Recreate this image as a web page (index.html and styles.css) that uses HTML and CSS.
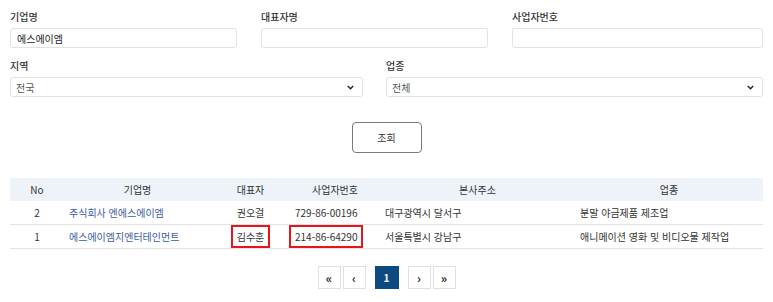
FILE: index.html
```html
<!DOCTYPE html>
<html lang="ko">
<head>
    <meta charset="UTF-8">
    <meta name="viewport" content="width=device-width, initial-scale=1.0">
    <title>기업 조회</title>
    <link rel="stylesheet" href="styles.css">
</head>
<body>
    <div class="search">
        <div class="row row-3">
            <div class="field">
                <label for="corp-name">기업명</label>
                <input type="text" id="corp-name" value="에스에이엠" />
            </div>
            <div class="field">
                <label for="ceo-name">대표자명</label>
                <input type="text" id="ceo-name" />
            </div>
            <div class="field">
                <label for="biz-no">사업자번호</label>
                <input type="text" id="biz-no" />
            </div>
        </div>
        <div class="row row-2">
            <div class="field">
                <label for="region">지역</label>
                <div class="select-wrap">
                    <select id="region">
                        <option>전국</option>
                        <option>서울특별시</option>
                        <option>대구광역시</option>
                    </select>
                    <svg class="chev" width="7" height="5" viewBox="0 0 7 5"><path d="M0.8 1 L3.5 3.8 L6.2 1" fill="none" stroke="#222" stroke-width="1.4"/></svg>
                </div>
            </div>
            <div class="field">
                <label for="industry">업종</label>
                <div class="select-wrap">
                    <select id="industry">
                        <option>전체</option>
                    </select>
                    <svg class="chev" width="7" height="5" viewBox="0 0 7 5"><path d="M0.8 1 L3.5 3.8 L6.2 1" fill="none" stroke="#222" stroke-width="1.4"/></svg>
                </div>
            </div>
        </div>
        <div class="search-btn">
            <button class="btn">조회</button>
        </div>
    </div>

    <table class="result">
        <colgroup>
            <col class="c-no">
            <col class="c-name">
            <col class="c-ceo">
            <col class="c-biz">
            <col class="c-addr">
            <col class="c-type">
        </colgroup>
        <thead>
            <tr>
                <th>No</th>
                <th>기업명</th>
                <th>대표자</th>
                <th>사업자번호</th>
                <th>본사주소</th>
                <th>업종</th>
            </tr>
        </thead>
        <tbody>
            <tr>
                <td class="center">2</td>
                <td><a href="#">주식회사 엔에스에이엠</a></td>
                <td class="center">권오걸</td>
                <td>729-86-00196</td>
                <td>대구광역시 달서구</td>
                <td>분말 야금제품 제조업</td>
            </tr>
            <tr>
                <td class="center">1</td>
                <td><a href="#">에스에이엠지엔터테인먼트</a></td>
                <td class="center"><span class="mark">김수훈</span></td>
                <td><span class="mark mark-left">214-86-64290</span></td>
                <td>서울특별시 강남구</td>
                <td>애니메이션 영화 및 비디오물 제작업</td>
            </tr>
        </tbody>
    </table>

    <div class="paging">
        <a href="#" class="pg">&laquo;</a>
        <a href="#" class="pg">&lsaquo;</a>
        <a href="#" class="pg active">1</a>
        <a href="#" class="pg">&rsaquo;</a>
        <a href="#" class="pg">&raquo;</a>
    </div>
</body>
</html>
```

FILE: styles.css
```css
body {
    font-family: "Noto Sans CJK KR", "Noto Sans", sans-serif;
    color: #333333;
    background: #ffffff;
    margin: 0;
    padding: 10px 10px 0;
    font-size: 10px;
}

.row {
    display: grid;
    margin-bottom: 11px;
}

.row-3 {
    grid-template-columns: 227px 227px 1fr;
    column-gap: 24px;
}

.row-2 {
    grid-template-columns: 353px 1fr;
    column-gap: 23px;
}

.field label {
    display: block;
    font-size: 10px;
    font-weight: 500;
    line-height: 14px;
    margin-bottom: 4px;
    color: #333333;
}

.field input,
.field select {
    display: block;
    width: 100%;
    height: 20px;
    box-sizing: border-box;
    border: 1px solid #e2e2e2;
    border-radius: 3px;
    padding: 0 6px;
    font-family: inherit;
    font-size: 10px;
    color: #222222;
    background: #ffffff;
}

.select-wrap {
    position: relative;
}

.field select {
    -webkit-appearance: none;
    appearance: none;
    color: #555555;
    padding: 0 20px 0 5px;
}

.chev {
    position: absolute;
    right: 9px;
    top: 8px;
    pointer-events: none;
}

.search-btn {
    text-align: center;
    padding-top: 14px;
}

.btn {
    width: 70px;
    height: 31px;
    border: 1px solid #7a7a7a;
    border-radius: 4px;
    background: #ffffff;
    font-family: inherit;
    font-size: 10px;
    color: #333333;
    cursor: pointer;
}

.result {
    width: 753px;
    margin-top: 25px;
    border-collapse: collapse;
    table-layout: fixed;
    font-size: 10px;
}

.c-no { width: 54px; }
.c-name { width: 147px; }
.c-ceo { width: 79px; }
.c-biz { width: 90px; }
.c-addr { width: 195px; }
.c-type { width: 188px; }

.result th {
    background: #eef3fa;
    height: 23px;
    font-weight: 400;
    text-align: center;
    padding: 0;
}

.result td {
    height: 23px;
    padding: 0 5px;
    border-bottom: 1px solid #e3e3e3;
    white-space: nowrap;
}

.result td.center {
    text-align: center;
}

.result a {
    color: #3c5da4;
    text-decoration: none;
}

.mark {
    display: inline-block;
    padding: 2px 4px;
    line-height: 15px;
    outline: 2px solid #e8141c;
}

.mark-left {
    margin-left: -4px;
}

.paging {
    display: flex;
    justify-content: center;
    align-items: center;
    margin-top: 17px;
}

.pg {
    width: 23px;
    height: 23px;
    box-sizing: border-box;
    border: 1px solid #e0e0e0;
    display: flex;
    align-items: center;
    justify-content: center;
    color: #222222;
    text-decoration: none;
    font-size: 12px;
    font-weight: 700;
    margin: 0 1px;
}

.pg.active {
    width: 24px;
    background: #0e4a82;
    border-color: #0e4a82;
    color: #ffffff;
    font-size: 10px;
    margin: 0 8px;
}
```
